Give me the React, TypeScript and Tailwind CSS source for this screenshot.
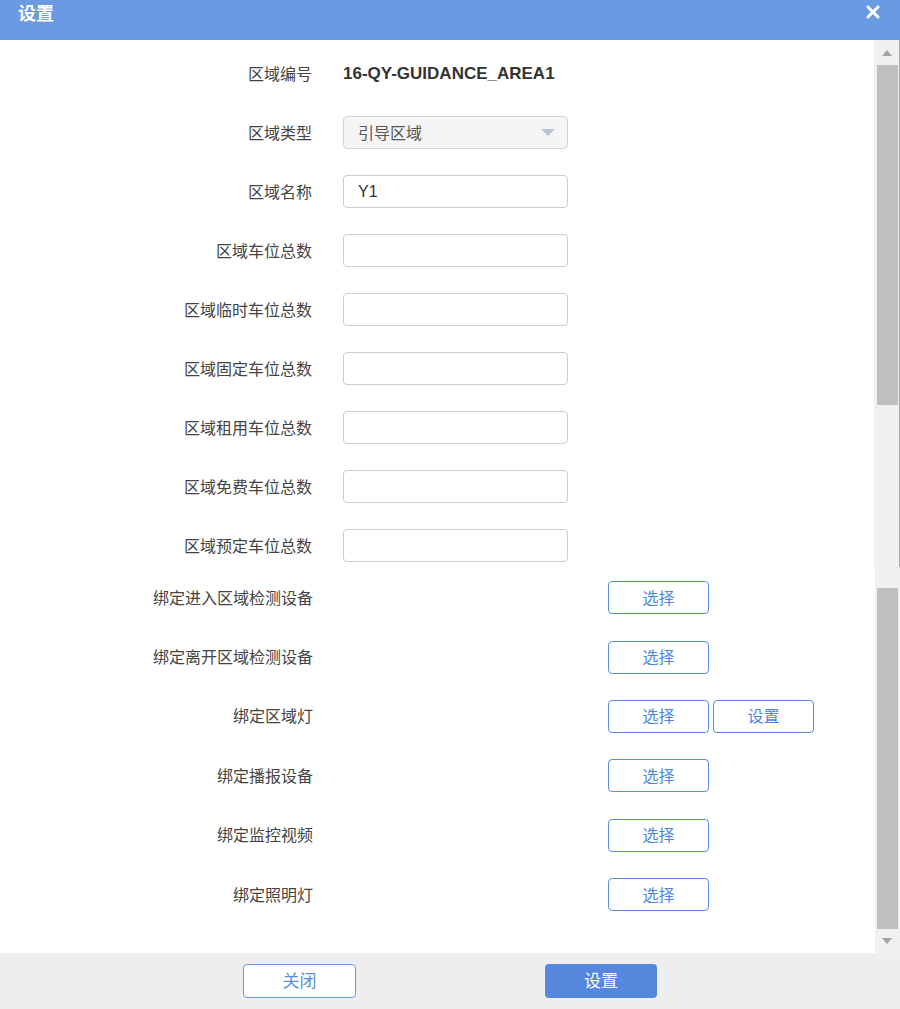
import React from "react";

const inputRows: { label: string; kind: "text" | "select" | "input"; value?: string }[] = [
  { label: "区域编号", kind: "text", value: "16-QY-GUIDANCE_AREA1" },
  { label: "区域类型", kind: "select", value: "引导区域" },
  { label: "区域名称", kind: "input", value: "Y1" },
  { label: "区域车位总数", kind: "input" },
  { label: "区域临时车位总数", kind: "input" },
  { label: "区域固定车位总数", kind: "input" },
  { label: "区域租用车位总数", kind: "input" },
  { label: "区域免费车位总数", kind: "input" },
  { label: "区域预定车位总数", kind: "input" },
];

const bindRows: { label: string; extra?: boolean }[] = [
  { label: "绑定进入区域检测设备" },
  { label: "绑定离开区域检测设备" },
  { label: "绑定区域灯", extra: true },
  { label: "绑定播报设备" },
  { label: "绑定监控视频" },
  { label: "绑定照明灯" },
];

const font = { fontFamily: '"Noto Sans CJK SC", "Liberation Sans", sans-serif' };

function OutlineBtn({ text }: { text: string }) {
  return (
    <button className="w-[101px] h-[33px] border border-[#5b8ee0] rounded-[4px] bg-white text-[16px] leading-[20px] pb-[2px] text-[#4a86e0] flex items-center justify-center">
      {text}
    </button>
  );
}

export default function App() {
  return (
    <div className="w-[900px] h-[1009px] bg-white flex flex-col overflow-hidden relative" style={font}>
      <div className="h-[40px] bg-[#6a9ae2] flex items-start justify-between pl-[18px] pr-[20px] pt-[0px] shrink-0">
        <span className="text-white text-[18px] font-bold leading-[24px]">设置</span>
        <svg width="14" height="14" viewBox="0 0 14 14" className="mt-[5px]">
          <path d="M2 2 L12 12 M12 2 L2 12" stroke="white" strokeWidth="3" strokeLinecap="round" />
        </svg>
      </div>
      <div className="flex flex-1 min-h-0">
        <div className="flex-1 pt-[4px] text-[16px] text-[#333]">
          {inputRows.map((r) => (
            <div key={r.label} className="h-[59px] flex items-center">
              <div className="w-[312px] text-right text-[#444] leading-[20px] pb-[2px]">{r.label}</div>
              <div className="ml-[31px]">
                {r.kind === "text" && (
                  <span className="text-[17px] font-bold text-[#333]" style={{ fontFamily: '"Liberation Sans", Arial, sans-serif' }}>
                    {r.value}
                  </span>
                )}
                {r.kind === "select" && (
                  <div className="w-[225px] h-[33px] border border-[#d4d4d4] rounded-[4px] bg-[#f5f5f5] flex items-center justify-between pl-[14px] pr-[12px]">
                    <span className="text-[16px] leading-[20px] pb-[1px] text-[#555]">{r.value}</span>
                    <svg width="14" height="8" viewBox="0 0 14 8">
                      <path d="M0 0 L14 0 L7 7 Z" fill="#b9c5d6" />
                    </svg>
                  </div>
                )}
                {r.kind === "input" && (
                  <div className="w-[225px] h-[33px] border border-[#cccccc] rounded-[4px] bg-white flex items-center pl-[14px]">
                    <span className="text-[16px] text-[#333]" style={{ fontFamily: '"Liberation Sans", Arial, sans-serif' }}>
                      {r.value ?? ""}
                    </span>
                  </div>
                )}
              </div>
            </div>
          ))}
          <div className="-mt-[7px]">
            {bindRows.map((r) => (
              <div key={r.label} className="h-[59.4px] flex items-center">
                <div className="w-[313px] text-right text-[#444] leading-[20px] pb-[2px]">{r.label}</div>
                <div className="ml-[295px] flex gap-[4px]">
                  <OutlineBtn text="选择" />
                  {r.extra && <OutlineBtn text="设置" />}
                </div>
              </div>
            ))}
          </div>
        </div>
        <div className="w-[26px] flex flex-col shrink-0">
          <div className="h-[527px] flex">
            <div className="w-[25px] bg-[#f0f0f0] flex flex-col items-center">
              <div className="h-[25px] w-full flex items-center justify-center">
                <svg width="10" height="6" viewBox="0 0 10 6">
                  <path d="M5 0 L10 6 L0 6 Z" fill="#a3a3a3" />
                </svg>
              </div>
              <div className="w-[21px] h-[340px] bg-[#bfbfbf] ml-[2px]" />
            </div>
            <div className="w-[1px] bg-[#a8a8a8]" />
          </div>
          <div className="flex-1 flex">
            <div className="w-[1px] bg-white" />
            <div className="w-[24px] bg-[#f0f0f0] flex flex-col items-center">
              <div className="h-[21px]" />
              <div className="w-[21px] h-[341px] bg-[#bfbfbf]" />
              <div className="flex-1 w-full flex items-center justify-center">
                <svg width="10" height="6" viewBox="0 0 10 6">
                  <path d="M0 0 L10 0 L5 6 Z" fill="#a3a3a3" />
                </svg>
              </div>
            </div>
            <div className="w-[1px] bg-[#f0f0f0]" />
          </div>
        </div>
      </div>
      <div className="h-[56px] bg-[#eeeeee] flex items-center shrink-0">
        <button className="ml-[243px] w-[113px] h-[34px] border border-[#6a9ae2] rounded-[4px] bg-white text-[17px] leading-[20px] pb-[2px] text-[#5b8ee0] flex items-center justify-center">
          关闭
        </button>
        <button className="ml-[189px] w-[112px] h-[34px] rounded-[4px] bg-[#5588dd] text-[17px] leading-[20px] pb-[2px] text-white flex items-center justify-center">
          设置
        </button>
      </div>
    </div>
  );
}
